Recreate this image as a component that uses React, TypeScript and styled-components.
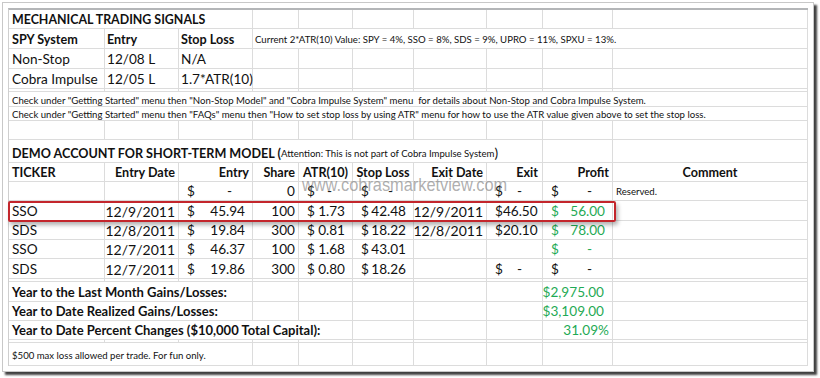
import React from "react";
import styled, { createGlobalStyle } from "styled-components";

const GlobalStyle = createGlobalStyle`
  *, *::before, *::after { box-sizing: border-box; }
  html, body { margin: 0; padding: 0; background: #ffffff; }
  body { font-family: "Lato", "Open Sans", sans-serif; }
`;

const COLS = "96px 74px 74px 46px 54px 61px 73px 56px 70px 195px";
const GRID = "#dcdcdc";
const GREEN = "#1faa55";

const Page = styled.div`
  width: 820px;
  height: 378px;
  padding: 2px 0 0 2px;
`;

const Frame = styled.div`
  width: 812px;
  height: 370px;
  background: #ffffff;
  border: 1px solid #c8c8c8;
  box-shadow: 3px 3px 2px rgba(0, 0, 0, 0.75);
  padding: 5px 0 0 5px;
`;

const Sheet = styled.div`
  position: relative;
  width: 800px;
  border-left: 1px solid #cfcfcf;
  border-top: 2px solid #b4b6b8;
  display: flex;
  flex-direction: column;
`;

const Row = styled.div<{ $h: number }>`
  display: grid;
  grid-template-columns: ${COLS};
  height: ${(p) => p.$h}px;
`;

type Align = "left" | "right" | "center";

const Cell = styled.div<{
  $span?: number;
  $align?: Align;
  $bold?: boolean;
  $small?: boolean;
  $green?: boolean;
  $pl?: number;
  $pr?: number;
  $pb?: number;
  $fs?: number;
}>`
  grid-column: span ${(p) => p.$span ?? 1};
  border-right: 1px solid ${GRID};
  border-bottom: 1px solid ${GRID};
  display: flex;
  align-items: flex-end;
  justify-content: ${(p) =>
    p.$align === "right" ? "flex-end" : p.$align === "center" ? "center" : "flex-start"};
  padding: 0 ${(p) => p.$pr ?? 3}px ${(p) => p.$pb ?? (p.$small ? 1 : 0)}px ${(p) => p.$pl ?? 3}px;
  white-space: pre;
  overflow: visible;
  font-size: ${(p) => p.$fs ?? (p.$small ? 9.6 : p.$bold ? 13 : 13.6)}px;
  line-height: ${(p) => (p.$small ? 11 : 17)}px;
  font-weight: ${(p) => (p.$bold ? 700 : 400)};
  color: ${(p) => (p.$green ? GREEN : "#111111")};
`;

const Acct = styled(Cell)<{ $trail?: boolean }>`
  justify-content: space-between;
  padding-left: 8px;
  padding-right: ${(p) => (p.$trail ? 20 : 7)}px;
`;

const Tiny = styled.span`
  font-size: 9.6px;
  font-weight: 400;
`;

const Paren = styled.span`
  font-size: 13.6px;
  font-weight: 400;
`;

const Watermark = styled.div`
  position: absolute;
  left: 293px;
  top: 164px;
  font-family: "Liberation Sans", Arial, sans-serif;
  font-size: 19px;
  line-height: 22px;
  color: rgba(125, 125, 125, 0.62);
  transform: scaleX(0.86);
  transform-origin: left top;
  white-space: nowrap;
  pointer-events: none;
`;

const Highlight = styled.div`
  position: absolute;
  left: -1px;
  top: 191px;
  width: 608px;
  height: 21px;
  border: 2px solid #c3262c;
  border-radius: 2px;
  box-shadow: 2px 3px 4px rgba(0, 0, 0, 0.3);
  pointer-events: none;
`;

const Blanks: React.FC<{ n: number }> = ({ n }) => (
  <>
    {Array.from({ length: n }).map((_, i) => (
      <Cell key={i} />
    ))}
  </>
);

const Money: React.FC<{ v: string; green?: boolean }> = ({ v, green }) => {
  if (v === "") return <Cell />;
  return (
    <Acct $green={green} $trail={v === "-"}>
      <span>$</span>
      <span>{v}</span>
    </Acct>
  );
};

type Trade = {
  t: string;
  d: string;
  e: string;
  s: string;
  atr: string;
  stop: string;
  xd: string;
  x: string;
  p: string;
  green: boolean;
  c: string;
  h: number;
};

const trades: Trade[] = [
  { t: "", d: "", e: "-", s: "0", atr: "-", stop: "-", xd: "", x: "-", p: "-", green: false, c: "Reserved.", h: 19 },
  { t: "SSO", d: "12/9/2011", e: "45.94", s: "100", atr: "1.73", stop: "42.48", xd: "12/9/2011", x: "46.50", p: "56.00", green: true, c: "", h: 20 },
  { t: "SDS", d: "12/8/2011", e: "19.84", s: "300", atr: "0.81", stop: "18.22", xd: "12/8/2011", x: "20.10", p: "78.00", green: true, c: "", h: 19 },
  { t: "SSO", d: "12/7/2011", e: "46.37", s: "100", atr: "1.68", stop: "43.01", xd: "", x: "", p: "-", green: true, c: "", h: 19 },
  { t: "SDS", d: "12/7/2011", e: "19.86", s: "300", atr: "0.80", stop: "18.26", xd: "", x: "-", p: "-", green: false, c: "", h: 20 },
];

const HEAD = 12.6;

export default function App() {
  return (
    <Page>
      <GlobalStyle />
      <Frame>
        <Sheet>
          <Row $h={19}>
            <Cell $span={3} $bold $fs={12.4}>MECHANICAL TRADING SIGNALS</Cell>
            <Blanks n={7} />
          </Row>
          <Row $h={20}>
            <Cell $bold $fs={HEAD}>SPY System</Cell>
            <Cell $bold $fs={HEAD} $pl={2}>Entry</Cell>
            <Cell $bold $fs={HEAD} $pl={2}>Stop Loss</Cell>
            <Cell $span={7} $small $pl={2} $pr={0} $pb={3}>
              {"Current 2*ATR(10) Value: SPY = 4%, SSO = 8%, SDS = 9%, UPRO = 11%, SPXU = 13%."}
            </Cell>
          </Row>
          <Row $h={20}>
            <Cell>Non-Stop</Cell>
            <Cell $pl={2}>12/08 L</Cell>
            <Cell $pl={2}>N/A</Cell>
            <Blanks n={7} />
          </Row>
          <Row $h={20}>
            <Cell>Cobra Impulse</Cell>
            <Cell $pl={2}>12/05 L</Cell>
            <Cell $pl={2}>1.7*ATR(10)</Cell>
            <Blanks n={7} />
          </Row>
          <Row $h={3}>
            <Blanks n={10} />
          </Row>
          <Row $h={15}>
            <Cell $span={10} $small $pb={0}>
              {"Check under \"Getting Started\" menu then \"Non-Stop Model\" and \"Cobra Impulse System\" menu  for details about Non-Stop and Cobra Impulse System."}
            </Cell>
          </Row>
          <Row $h={14}>
            <Cell $span={10} $small $pb={0}>
              {"Check under \"Getting Started\" menu then \"FAQs\" menu then \"How to set stop loss by using ATR\" menu for how to use the ATR value given above to set the stop loss."}
            </Cell>
          </Row>
          <Row $h={19}>
            <Blanks n={10} />
          </Row>
          <Row $h={23}>
            <Cell $span={8} $bold $fs={12.6}>
              DEMO ACCOUNT FOR SHORT-TERM MODEL (<Tiny>Attention: This is not part of Cobra Impulse System</Tiny>
              <Paren>)</Paren>
            </Cell>
            <Blanks n={2} />
          </Row>
          <Row $h={19}>
            <Cell $bold $fs={HEAD}>TICKER</Cell>
            <Cell $bold $fs={HEAD} $align="right">Entry Date</Cell>
            <Cell $bold $fs={HEAD} $align="right">Entry</Cell>
            <Cell $bold $fs={HEAD} $align="right">Share</Cell>
            <Cell $bold $fs={HEAD} $pl={4}>ATR(10)</Cell>
            <Cell $bold $fs={HEAD} $align="center" $pl={0} $pr={0}>Stop Loss</Cell>
            <Cell $bold $fs={HEAD} $align="right">Exit Date</Cell>
            <Cell $bold $fs={HEAD} $align="right" $pr={4}>Exit</Cell>
            <Cell $bold $fs={HEAD} $align="right">Profit</Cell>
            <Cell $bold $fs={HEAD} $align="center">Comment</Cell>
          </Row>
          {trades.map((r, i) => (
            <Row key={i} $h={r.h}>
              <Cell>{r.t}</Cell>
              <Cell $align="right" $fs={14}>{r.d}</Cell>
              <Money v={r.e} />
              <Cell $align="right">{r.s}</Cell>
              <Money v={r.atr} />
              <Money v={r.stop} />
              <Cell $align="right" $fs={14}>{r.xd}</Cell>
              <Money v={r.x} />
              <Money v={r.p} green={r.green} />
              <Cell $small $pb={3}>{r.c}</Cell>
            </Row>
          ))}
          <Row $h={3}>
            <Blanks n={10} />
          </Row>
          <Row $h={20}>
            <Cell $span={3} $bold>Year to the Last Month Gains/Losses:</Cell>
            <Blanks n={5} />
            <Cell $align="right" $green $pr={8}>$2,975.00</Cell>
            <Cell />
          </Row>
          <Row $h={19}>
            <Cell $span={3} $bold>Year to Date Realized Gains/Losses:</Cell>
            <Blanks n={5} />
            <Cell $align="right" $green $pr={8}>$3,109.00</Cell>
            <Cell />
          </Row>
          <Row $h={19}>
            <Cell $span={5} $bold>Year to Date Percent Changes ($10,000 Total Capital):</Cell>
            <Blanks n={3} />
            <Cell $align="right" $green>31.09%</Cell>
            <Cell />
          </Row>
          <Row $h={3}>
            <Blanks n={10} />
          </Row>
          <Row $h={23}>
            <Cell $span={3} $small $pb={4}>$500 max loss allowed per trade. For fun only.</Cell>
            <Blanks n={7} />
          </Row>
          <Highlight />
          <Watermark>www.cobrasmarketview.com</Watermark>
        </Sheet>
      </Frame>
    </Page>
  );
}
